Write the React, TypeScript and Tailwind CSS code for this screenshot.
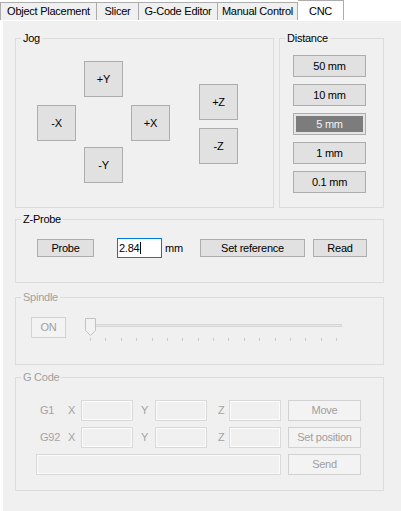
import type { ReactNode } from "react";

function GroupBox({
  title,
  disabled,
  className,
  bodyClass,
  children,
}: {
  title: string;
  disabled?: boolean;
  className: string;
  bodyClass: string;
  children?: ReactNode;
}) {
  return (
    <div className={className}>
      {/* header row: border line broken by the title */}
      <div className="flex h-[13px]">
        <div className="mt-[6px] w-[6px] border-l border-t border-[#dcdcdc]" />
        <span className={`px-[2px] leading-[13px] ${disabled ? "text-[#a0a0a0]" : "text-black"}`}>
          {title}
        </span>
        <div className="mt-[6px] flex-1 border-r border-t border-[#dcdcdc]" />
      </div>
      <div className={`border-x border-b border-[#dcdcdc] ${bodyClass}`}>{children}</div>
    </div>
  );
}

function Btn({ label, className }: { label: string; className: string }) {
  return (
    <button
      className={`flex shrink-0 items-center justify-center border border-[#adadad] bg-[#e1e1e1] leading-none text-black ${className}`}
    >
      {label}
    </button>
  );
}

function OffBtn({ label, className }: { label: string; className: string }) {
  return (
    <button
      disabled
      className={`flex shrink-0 items-center justify-center border border-[#d2d2d2] bg-[#f3f3f3] leading-none text-[#a0a0a0] ${className}`}
    >
      {label}
    </button>
  );
}

function OffBox({ className }: { className: string }) {
  return (
    <div
      className={`h-[21px] shrink-0 border border-[#d9d9d9] bg-[#f0f0f0] shadow-[inset_0_0_0_1px_#fbfbfb] ${className}`}
    />
  );
}

function Slider() {
  const ticks = Array.from({ length: 17 }, (_, i) => Math.round(5 + i * 15.375) + 0.5);
  return (
    <svg width="258" height="25" viewBox="0 0 258 25" className="ml-[19px] shrink-0">
      <rect x="5.5" y="7.5" width="251" height="2" fill="#e7e7e7" stroke="#d6d6d6" />
      {ticks.map((x) => (
        <line key={x} x1={x} y1="21" x2={x} y2="24" stroke="#c8c8c8" />
      ))}
      <path d="M0.5 1.5 H10.5 V13.5 L5.5 18.5 L0.5 13.5 Z" fill="#f2f2f2" stroke="#c2c2c2" />
    </svg>
  );
}

const tabs = [
  { label: "Object Placement", cls: "w-[97px] border-l" },
  { label: "Slicer", cls: "w-[42px]" },
  { label: "G-Code Editor", cls: "w-[79px]" },
  { label: "Manual Control", cls: "w-[80px]" },
];

const distances = ["50 mm", "10 mm", "5 mm", "1 mm", "0.1 mm"];

export default function App() {
  return (
    <div className="h-[511px] w-[401px] overflow-hidden bg-white font-['Liberation_Sans',Arial,sans-serif] text-[11px] tracking-[-0.25px] text-black">
      {/* Tab strip */}
      <div className="flex h-[20px]">
        {tabs.map((t) => (
          <div
            key={t.label}
            className={`mt-[2px] flex h-[18px] items-center justify-center whitespace-nowrap border-r border-t border-[#acacac] bg-[#f0f0f0] ${t.cls}`}
          >
            {t.label}
          </div>
        ))}
        <div className="flex h-[20px] w-[46px] items-start justify-center border-r border-t border-[#acacac] bg-white pt-[2px]">
          CNC
        </div>
      </div>

      {/* Tab page */}
      <div className="ml-[3px] mt-[1px] h-[490px] bg-[#f0f0f0] pl-[12px] pt-[11px]">
        <div className="flex gap-[5px]">
          <GroupBox title="Jog" className="w-[259px]" bodyClass="flex h-[163px] pl-[21px] pt-[16px]">
            <div className="flex w-[133px] flex-col">
              <Btn label="+Y" className="ml-[47px] h-[36px] w-[39px]" />
              <div className="mt-[8px] flex justify-between">
                <Btn label="-X" className="h-[36px] w-[39px]" />
                <Btn label="+X" className="h-[36px] w-[39px]" />
              </div>
              <Btn label="-Y" className="ml-[47px] mt-[6px] h-[36px] w-[39px]" />
            </div>
            <div className="ml-[29px] mt-[23px] flex flex-col gap-[8px]">
              <Btn label="+Z" className="h-[36px] w-[39px]" />
              <Btn label="-Z" className="h-[36px] w-[39px]" />
            </div>
          </GroupBox>

          <GroupBox title="Distance" className="w-[105px]" bodyClass="flex h-[163px] flex-col gap-[7px] pl-[13px] pt-[10px]">
            {distances.map((d) =>
              d === "5 mm" ? (
                <div key={d} className="h-[22px] w-[73px] border border-[#adadad] bg-[#e5e5e5] p-[2px]">
                  <div className="flex h-full items-center justify-center bg-[#7c7c7c] leading-none text-[#f2f2f2]">
                    {d}
                  </div>
                </div>
              ) : (
                <Btn key={d} label={d} className="h-[22px] w-[73px]" />
              )
            )}
          </GroupBox>
        </div>

        <GroupBox title="Z-Probe" className="mt-[5px] w-[369px]" bodyClass="h-[57px] pl-[21px] pt-[12px]">
          <div className="flex items-center">
            <Btn label="Probe" className="h-[18px] w-[57px]" />
            <div className="ml-[23px] flex h-[20px] w-[45px] items-center border border-[#0078d7] bg-white pl-[1px]">
              <span className="leading-none">2.84</span>
              <span className="ml-[1px] h-[12px] w-px bg-black" />
            </div>
            <span className="w-[38px] pl-[3px]">mm</span>
            <Btn label="Set reference" className="h-[18px] w-[105px]" />
            <Btn label="Read" className="ml-[8px] h-[18px] w-[54px]" />
          </div>
        </GroupBox>

        <GroupBox title="Spindle" disabled className="mt-[8px] w-[369px]" bodyClass="flex h-[61px] items-start pl-[15px] pt-[13px]">
          <OffBtn label="ON" className="h-[21px] w-[35px]" />
          <Slider />
        </GroupBox>

        <GroupBox title="G Code" disabled className="mt-[6px] w-[369px]" bodyClass="flex h-[107px] flex-col gap-[6px] pl-[20px] pt-[16px] text-[#a3a3a3]">
          {["G1", "G92"].map((g) => (
            <div key={g} className="flex h-[21px] items-center">
              <span className="w-[32px] pl-[4px]">{g}</span>
              <span className="w-[13px]">X</span>
              <OffBox className="w-[52px]" />
              <span className="ml-[8px] w-[14px]">Y</span>
              <OffBox className="w-[52px]" />
              <span className="ml-[11px] w-[11px]">Z</span>
              <OffBox className="w-[52px]" />
              <OffBtn label={g === "G1" ? "Move" : "Set position"} className="ml-[7px] h-[21px] w-[73px]" />
            </div>
          ))}
          <div className="flex h-[21px] items-center">
            <OffBox className="w-[245px]" />
            <OffBtn label="Send" className="ml-[7px] h-[21px] w-[73px]" />
          </div>
        </GroupBox>
      </div>
    </div>
  );
}
